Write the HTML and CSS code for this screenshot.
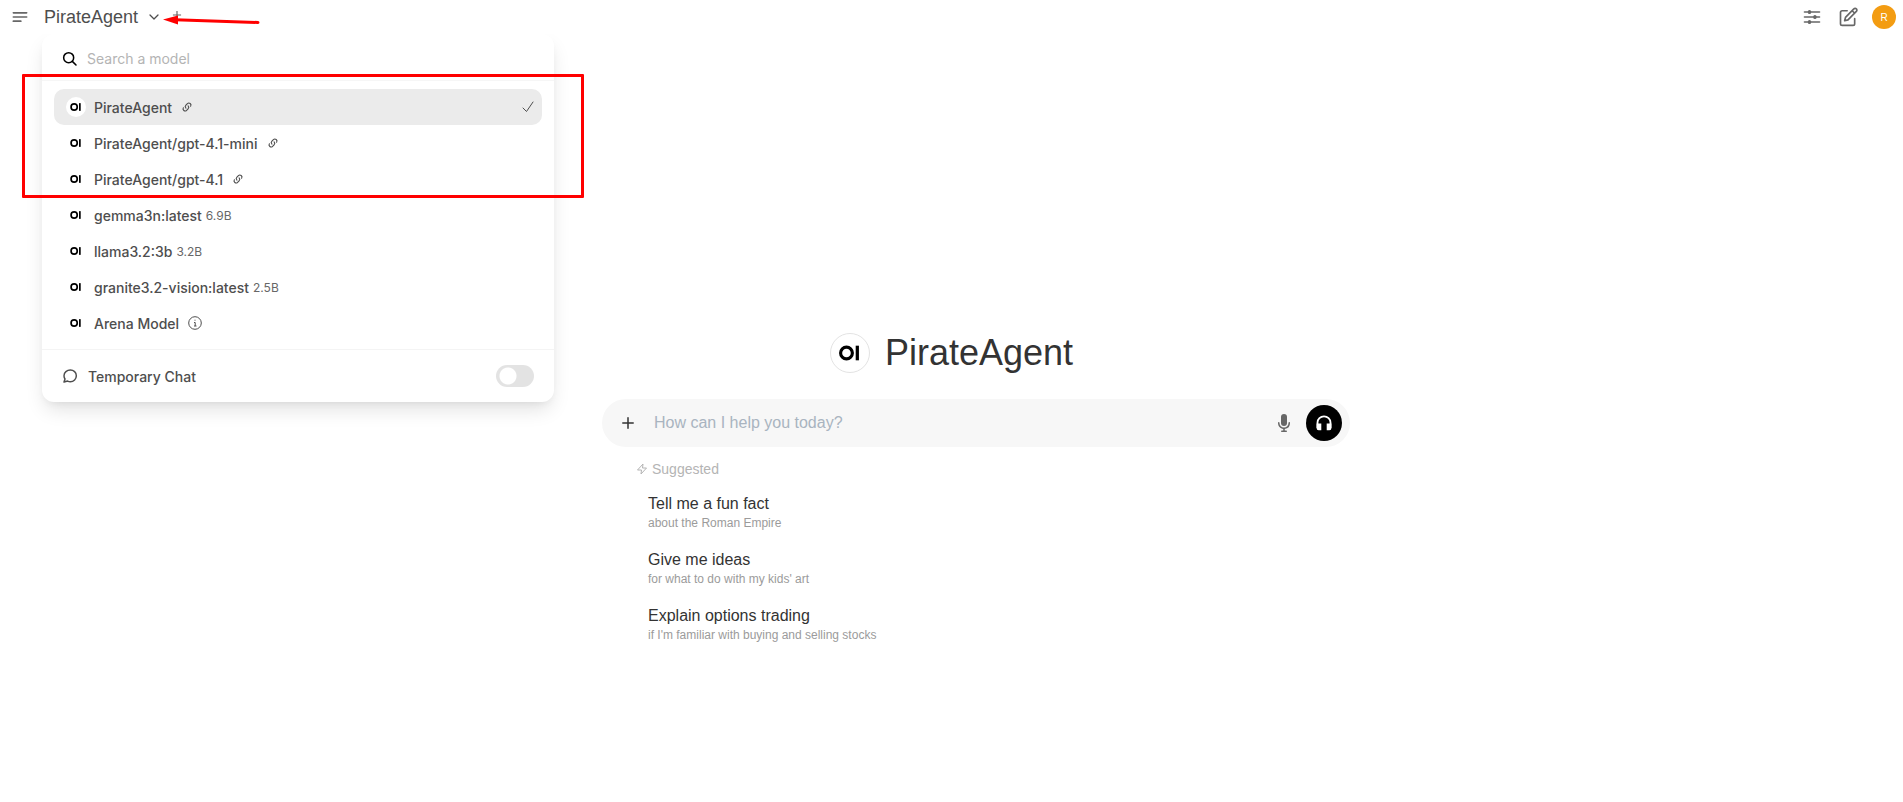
FILE: index.html
```
<!DOCTYPE html>
<html lang="en">
<head>
    <meta charset="utf-8">
    <title>PirateAgent</title>
    <link rel="stylesheet" href="styles.css">
</head>
<body>
    <!-- shared shapes -->
    <svg class="defs" aria-hidden="true">
        <symbol id="oi" viewBox="0 0 40 40">
            <circle cx="16.3" cy="20" r="6.2" fill="none" stroke="#000" stroke-width="3.3"/>
            <rect x="26" y="12.3" width="3.4" height="15.4" fill="#000"/>
        </symbol>
        <symbol id="link" viewBox="0 0 16 16">
            <path fill="currentColor" d="M8.914 6.025a.75.75 0 0 1 1.06 0 3.5 3.5 0 0 1 0 4.95l-2 2a3.5 3.5 0 0 1-5.396-4.402.75.75 0 0 1 1.251.827 2 2 0 0 0 3.085 2.514l2-2a2 2 0 0 0 0-2.828.75.75 0 0 1 0-1.06Z"/>
            <path fill="currentColor" d="M7.086 9.975a.75.75 0 0 1-1.06 0 3.5 3.5 0 0 1 0-4.95l2-2a3.5 3.5 0 0 1 5.396 4.402.75.75 0 0 1-1.251-.827 2 2 0 0 0-3.085-2.514l-2 2a2 2 0 0 0 0 2.828.75.75 0 0 1 0 1.06Z"/>
        </symbol>
    </svg>

    <header class="nav">
        <button class="icon-btn" aria-label="Toggle sidebar">
            <svg width="20" height="20" viewBox="0 0 24 24" fill="none" stroke="currentColor" stroke-width="2" stroke-linecap="round"><path d="M4 7h16M4 12h16M4 17h9"/></svg>
        </button>
        <button class="model-btn">PirateAgent
            <svg width="12" height="12" viewBox="0 0 24 24" fill="none" stroke="currentColor" stroke-width="2.5" stroke-linecap="round" stroke-linejoin="round"><path d="M4 8l8 8 8-8"/></svg>
        </button>
        <button class="icon-btn add" aria-label="Add model">
            <svg width="14" height="14" viewBox="0 0 24 24" fill="none" stroke="currentColor" stroke-width="2"><path d="M12 5v14M5 12h14"/></svg>
        </button>
        <div class="nav-right">
            <button class="icon-btn" aria-label="Controls">
                <svg width="20" height="20" viewBox="0 0 24 24" fill="none" stroke="currentColor" stroke-width="2" stroke-linecap="round"><path d="M3 6h18M3 12h18M3 18h18"/><path stroke-width="4" d="M9 5.500v1M15.500 11.500v1M9 17.500v1"/></svg>
            </button>
            <button class="icon-btn" aria-label="New chat">
                <svg width="20" height="20" viewBox="0 0 24 24" fill="none" stroke="currentColor" stroke-width="2" stroke-linecap="round" stroke-linejoin="round"><path d="M11 4.500H5a2 2 0 0 0-2 2V20a2 2 0 0 0 2 2h13a2 2 0 0 0 2-2v-6"/><path d="M9 12.500L19 2.300a2 2 0 0 1 3 0 2 2 0 0 1 0 3L12 15.500l-4 1zM17 4.500l3 3"/></svg>
            </button>
            <button class="avatar">R</button>
        </div>
    </header>

    <section class="menu">
        <div class="search">
            <svg width="16" height="16" viewBox="0 0 24 24" fill="none" stroke="currentColor" stroke-width="2.300" stroke-linecap="round"><circle cx="10" cy="10" r="7.500"/><path d="M15.500 15.500l5.500 5.500"/></svg>
            <input type="text" placeholder="Search a model" aria-label="Search a model">
        </div>
        <div class="models">
            <button class="model selected"><svg class="logo"><use href="#oi"/></svg><span>PirateAgent</span><svg class="link"><use href="#link"/></svg>
                <svg class="check" width="14" height="14" viewBox="0 0 14 14" fill="none" stroke="currentColor" stroke-linecap="round" stroke-linejoin="round"><path d="M2 8l3.500 3.500L12 2"/></svg>
            </button>
            <button class="model"><svg class="logo"><use href="#oi"/></svg><span>PirateAgent/gpt-4.1-mini</span><svg class="link"><use href="#link"/></svg></button>
            <button class="model"><svg class="logo"><use href="#oi"/></svg><span>PirateAgent/gpt-4.1</span><svg class="link"><use href="#link"/></svg></button>
            <button class="model"><svg class="logo"><use href="#oi"/></svg><span>gemma3n:latest</span><small>6.9B</small></button>
            <button class="model"><svg class="logo"><use href="#oi"/></svg><span>llama3.2:3b</span><small>3.2B</small></button>
            <button class="model"><svg class="logo"><use href="#oi"/></svg><span>granite3.2-vision:latest</span><small>2.5B</small></button>
            <button class="model"><svg class="logo"><use href="#oi"/></svg><span>Arena Model</span>
                <svg class="info" width="14" height="14" viewBox="0 0 14 14" fill="none" stroke="currentColor"><circle cx="7" cy="7" r="6.300"/><path d="M6 6.500h1.200v3.500M6 10h2.500M6.500 4.200h1"/></svg>
            </button>
        </div>
        <div class="temporary">
            <svg width="16" height="16" viewBox="0 0 24 24" fill="none" stroke="currentColor" stroke-width="2.200" stroke-linecap="round" stroke-linejoin="round"><path d="M12.500 3c5 0 9 3.600 9 8.500s-4 9-9 9c-1.500 0-2.800-.3-4-.9L3 21l1.500-4.500C3.500 15 3 13.300 3 11.500 3 6.600 7.500 3 12.500 3z"/></svg>
            <label for="temp">Temporary Chat</label>
            <input id="temp" class="switch" type="checkbox">
        </div>
    </section>

    <main class="main">
        <h1><svg class="big-logo"><use href="#oi"/></svg>PirateAgent</h1>
        <div class="content">
            <form class="composer">
                <button type="button" class="icon-btn plus" aria-label="More">
                    <svg width="20" height="20" viewBox="0 0 20 20" fill="none" stroke="currentColor" stroke-width="1.500" stroke-linecap="round"><path d="M10 4.800v10.400M4.800 10h10.400"/></svg>
                </button>
                <input type="text" placeholder="How can I help you today?" aria-label="Message">
                <button type="button" class="icon-btn" aria-label="Record voice">
                    <svg width="20" height="20" viewBox="0 0 20 20" fill="currentColor"><path d="M7 4a3 3 0 0 1 6 0v6a3 3 0 1 1-6 0V4Z"/><path d="M5.500 9.643a.75.75 0 0 0-1.500 0V10c0 3.060 2.290 5.585 5.250 5.954V17.500h-1.500a.75.75 0 0 0 0 1.500h4.500a.75.75 0 0 0 0-1.500h-1.500v-1.546A6.001 6.001 0 0 0 16 10v-.357a.75.75 0 0 0-1.500 0V10a4.500 4.500 0 0 1-9 0v-.357Z"/></svg>
                </button>
                <button type="button" class="call" aria-label="Voice mode">
                    <svg width="20" height="20" viewBox="0 0 20 20"><path d="M3.500 15V9.500a6.500 6.200 0 0 1 13 0V15" fill="none" stroke="#fff" stroke-width="1.800"/><path d="M2.600 10.500h4.700v6.700H4.600a2 2 0 0 1-2-2zM12.700 10.500h4.700v4.700a2 2 0 0 1-2 2h-2.700z" fill="#fff"/></svg>
                </button>
            </form>
            <p class="suggested">
                <svg width="12" height="12" viewBox="0 0 24 24" fill="none" stroke="currentColor" stroke-width="2" stroke-linejoin="round"><path d="M14 2L3 14h8l-1 8 11-12h-8z"/></svg>
                Suggested
            </p>
            <div class="prompts">
                <button class="prompt"><b>Tell me a fun fact</b><span>about the Roman Empire</span></button>
                <button class="prompt"><b>Give me ideas</b><span>for what to do with my kids' art</span></button>
                <button class="prompt"><b>Explain options trading</b><span>if I'm familiar with buying and selling stocks</span></button>
            </div>
        </div>
    </main>

    <!-- red marks over the page -->
    <div class="mark-box"></div>
    <svg class="mark-arrow" width="100" height="12" viewBox="0 0 100 12"><path d="M12 5.700L95 8.500" stroke="#f00" stroke-width="3" stroke-linecap="round"/><path d="M0 5.500L15 1.500v9z" fill="#f00"/></svg>
</body>
</html>
```
FILE: styles.css
```
*{
    margin:0;
    padding:0;
    box-sizing:border-box;
}
body{
    font-family:"Liberation Sans", Arial, sans-serif;
    color:#4e4e4e;
    background:#fff;
}
button, input{
    font:inherit;
    color:inherit;
    background:none;
    border:0;
    outline:0;
}
button{
    cursor:pointer;
}
svg{
    display:block;
    flex:none;
}
.defs{
    position:absolute;
    width:0;
    height:0;
}

/* top bar */
.nav{
    display:flex;
    align-items:center;
    height:34px;
    padding:0 7px 0 10px;
}
.icon-btn{
    color:#676767;
}
.model-btn{
    display:flex;
    align-items:center;
    gap:10px;
    margin-left:14px;
    font-size:18px;
    line-height:28px;
}
.add{
    margin-left:10px;
    padding-bottom:4px;
}
.nav-right{
    display:flex;
    align-items:center;
    gap:16px;
    margin-left:auto;
}
.avatar{
    width:24px;
    height:24px;
    margin-left:-2px;
    border-radius:50%;
    background:#f39c12;
    color:#fff;
    font-size:10px;
}

/* model menu */
.menu{
    position:absolute;
    top:34px;
    left:42px;
    width:512px;
    max-width:calc(100% - 84px);
    border-radius:12px;
    background:#fff;
    box-shadow:0 10px 20px -3px rgba(0,0,0,.12), 0 4px 8px -4px rgba(0,0,0,.08);
    font-family:Inter, sans-serif;
    font-size:14px;
    line-height:20px;
    clip-path:inset(0 -30px -40px -30px);
}
.search{
    display:flex;
    align-items:center;
    gap:9px;
    height:47px;
    padding:3px 20px 0;
    border-bottom:1px solid #f6f6f6;
    color:#000;
}
.search input{
    flex:1;
}
.search input::placeholder{
    color:#b4b4b4;
}
.models{
    padding:8px 12px;
}
.model{
    display:flex;
    align-items:center;
    width:100%;
    height:36px;
    padding:0 7px 0 12px;
    border-radius:10px;
    font-weight:500;
}
.model span, .model small, .temporary label{
    padding-top:2px;
}
.selected{
    background:#ebebeb;
}
.logo{
    width:20px;
    height:20px;
    margin-right:8px;
    border-radius:50%;
    background:#fff;
}
.model small{
    margin-left:4px;
    font-size:12px;
    font-weight:400;
    color:#676767;
}
.link{
    width:12px;
    height:12px;
    margin-left:9px;
}
.info{
    margin-left:9px;
}
.check{
    margin-left:auto;
}
.temporary{
    display:flex;
    align-items:center;
    gap:10px;
    height:53px;
    padding:0 20px;
    border-top:1px solid #f4f4f4;
    font-weight:500;
}
.switch{
    appearance:none;
    width:38px;
    height:22px;
    margin-left:auto;
    border-radius:11px;
    background:radial-gradient(circle at 12px 11px, #fff 8px, #e3e3e3 9px);
}
.switch:checked{
    background:radial-gradient(circle at 26px 11px, #fff 8px, #00a63e 9px);
}

/* start page */
.main{
    display:flex;
    flex-direction:column;
    align-items:center;
    gap:26px;
    padding-top:299px;
}
h1{
    display:flex;
    align-items:center;
    gap:15px;
    font-size:36px;
    font-weight:400;
    line-height:40px;
    color:#333;
}
.big-logo{
    width:40px;
    height:40px;
    border:1px solid #e3e3e3;
    border-radius:50%;
}
.content{
    width:100%;
    max-width:748px;
    margin-left:49px;
}
.composer{
    display:flex;
    align-items:center;
    height:48px;
    padding:0 8px 0 16px;
    border-radius:24px;
    background:#f7f7f7;
}
.composer .plus{
    color:#333;
}
.composer input{
    flex:1;
    margin-left:16px;
    font-size:16px;
}
.composer input::placeholder{
    color:#a9b4c0;
}
.call{
    display:grid;
    place-items:center;
    width:36px;
    height:36px;
    margin-left:12px;
    border-radius:50%;
    background:#000;
}
.suggested{
    display:flex;
    align-items:center;
    gap:4px;
    padding:12px 34px 0;
    font-size:14px;
    line-height:20px;
    color:#b4b4b4;
}
.prompts{
    display:grid;
    gap:18px;
    padding:14px 46px;
}
.prompt{
    display:grid;
    text-align:left;
}
.prompt b{
    font-size:16px;
    font-weight:400;
    line-height:22px;
    color:#333;
}
.prompt span{
    font-size:12px;
    line-height:16px;
    color:#9b9b9b;
}

/* red marks */
.mark-box{
    position:absolute;
    top:74px;
    left:22px;
    width:562px;
    height:124px;
    border:3px solid #f00;
    border-radius:1px;
}
.mark-arrow{
    position:absolute;
    top:14px;
    left:163px;
}
```
